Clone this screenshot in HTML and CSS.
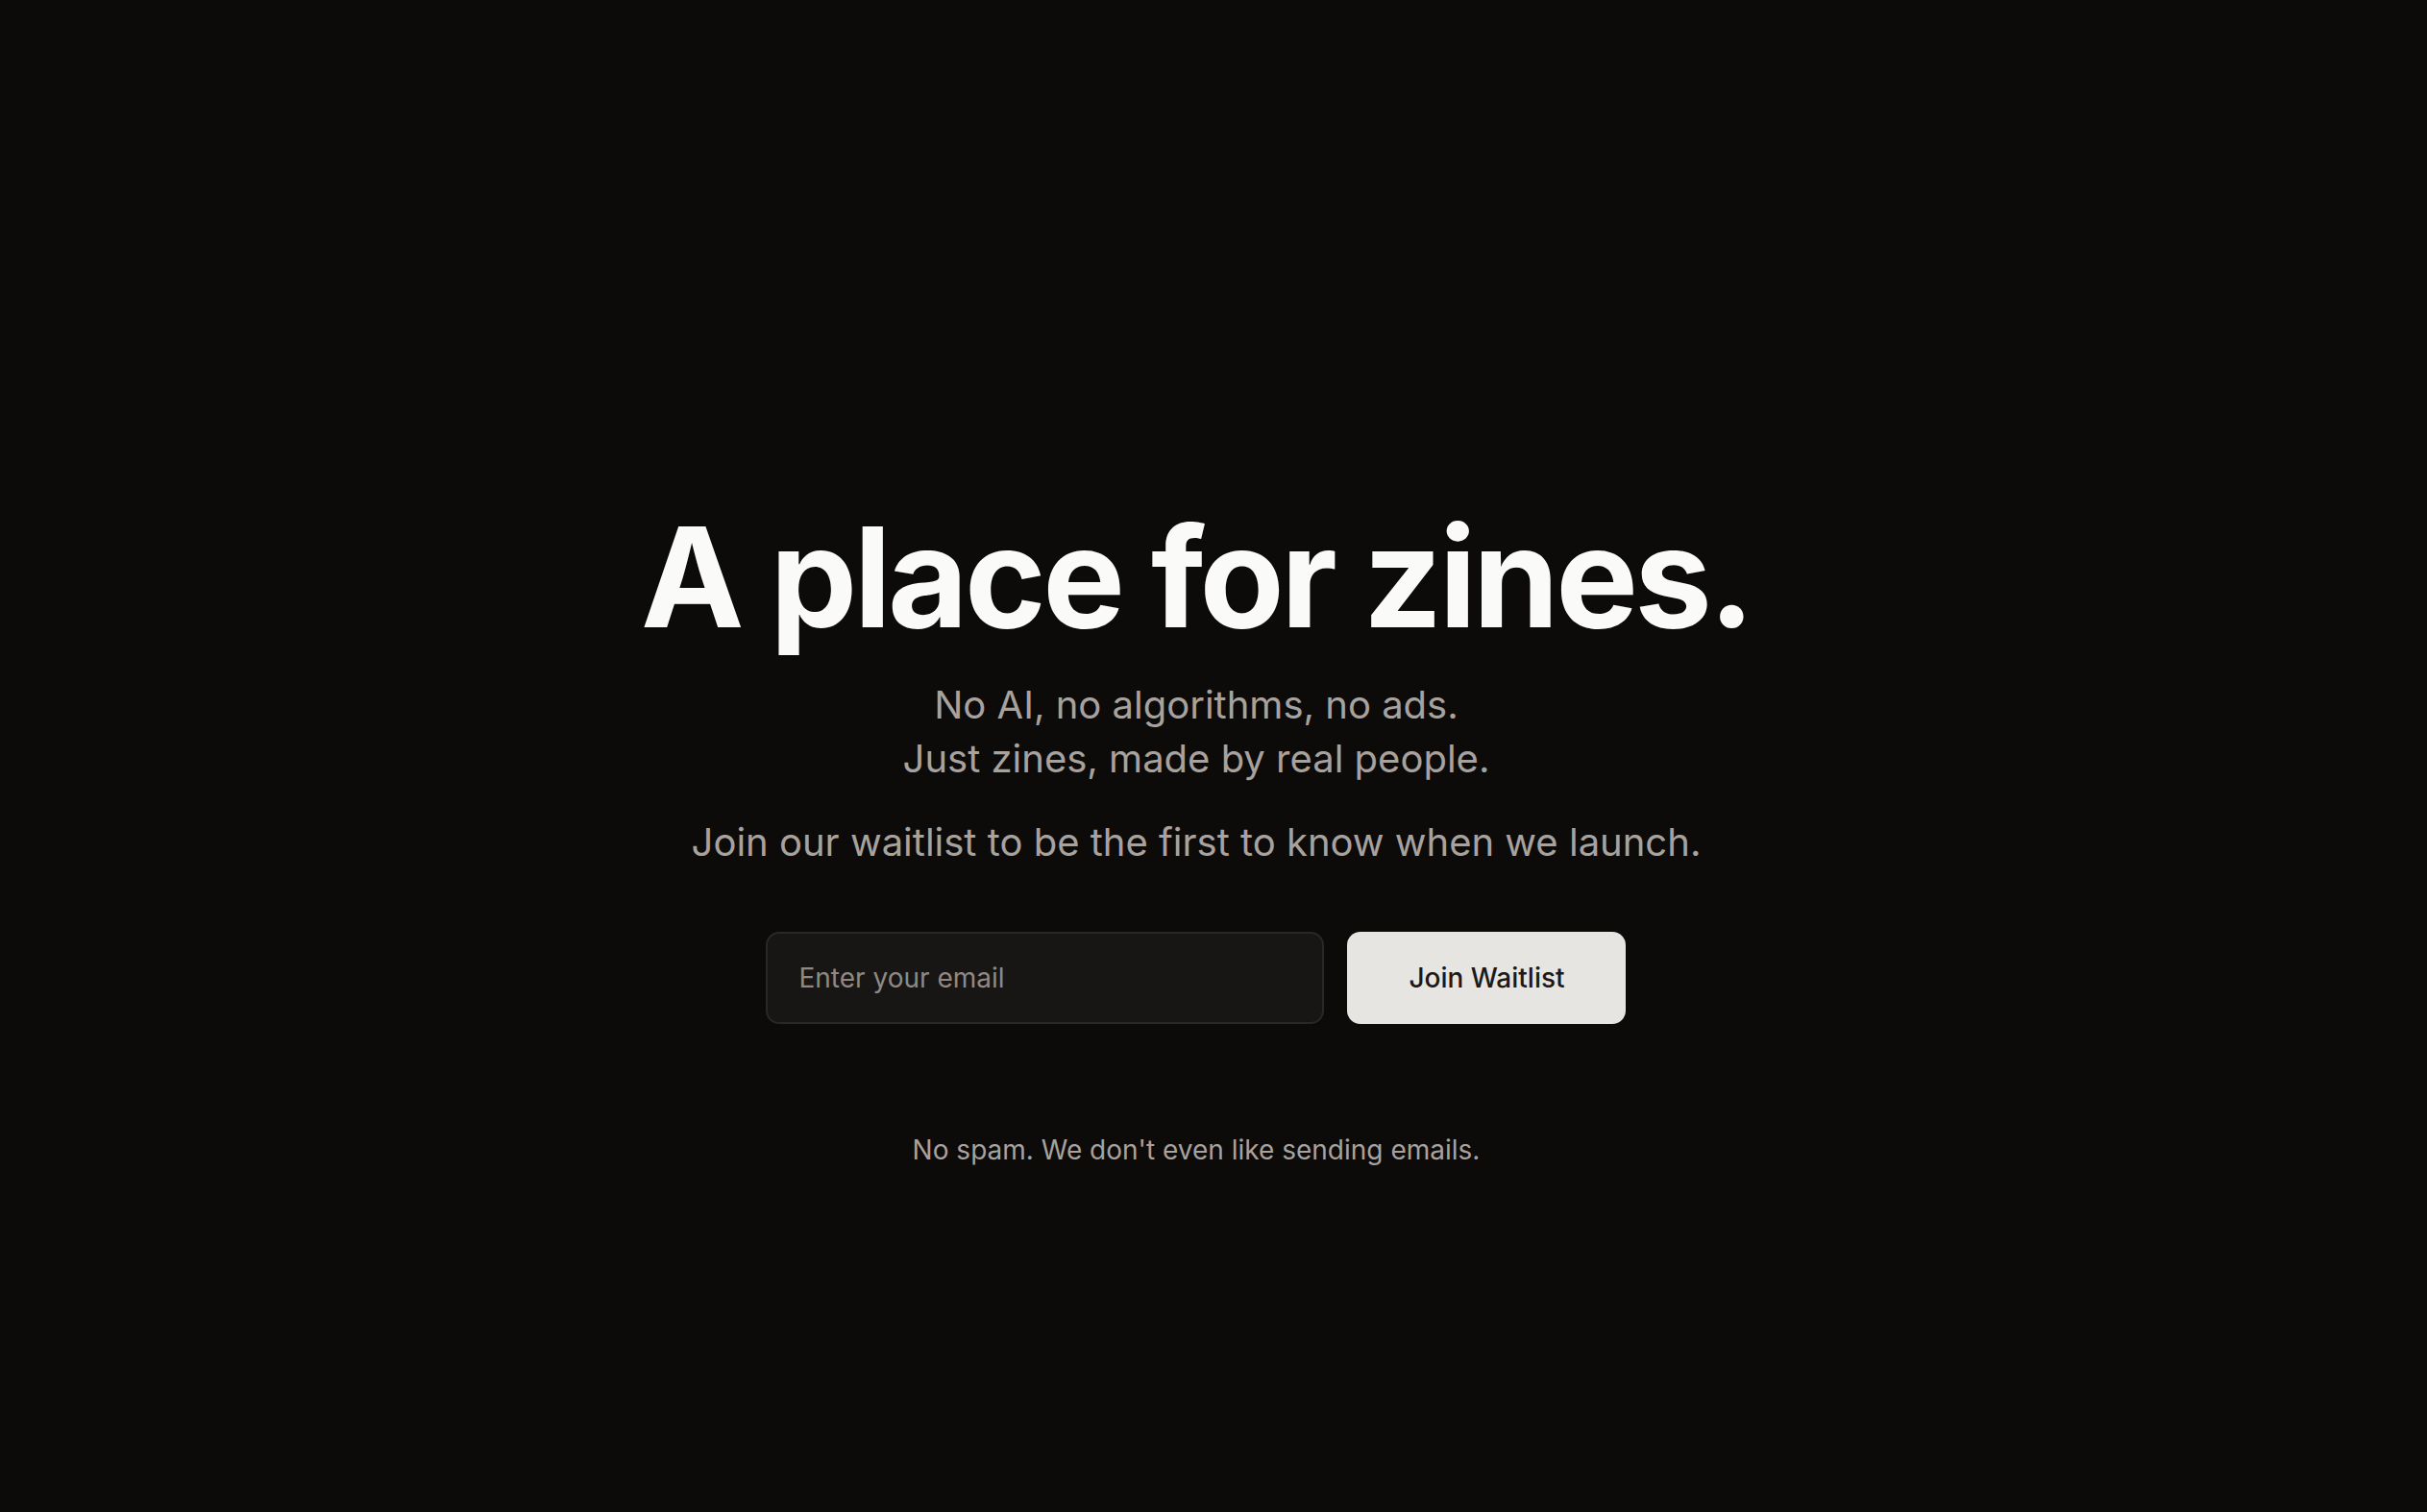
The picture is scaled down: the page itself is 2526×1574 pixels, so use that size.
FILE: index.html
```html
<!DOCTYPE html>
<html lang="en">
<head>
<meta charset="utf-8">
<title>A place for zines.</title>
<link rel="stylesheet" href="styles.css">
</head>
<body>
<main class="page">
  <section class="hero">
    <h1 class="title">A place for zines.</h1>
    <p class="tagline">No AI, no algorithms, no ads.<br>Just zines, made by real people.</p>
    <p class="invite">Join our waitlist to be the first to know when we launch.</p>
    <form class="signup" onsubmit="return false;">
      <input class="email" type="email" placeholder="Enter your email">
      <button class="join" type="submit">Join Waitlist</button>
    </form>
    <p class="note">No spam. We don't even like sending emails.</p>
  </section>
</main>
</body>
</html>
```

FILE: styles.css
```css
html, body {
  margin: 0;
  padding: 0;
  background: #0c0b0a;
}
body {
  font-family: Inter, "Noto Sans", sans-serif;
  color: #fafaf9;
}
.page {
  min-height: 1574px;
  box-sizing: border-box;
  padding: 529px 36px 0 0;
  display: flex;
  justify-content: center;
}
.hero {
  display: flex;
  flex-direction: column;
  align-items: center;
  text-align: center;
}
.title {
  margin: 0;
  font-size: 144px;
  line-height: 144px;
  font-weight: 700;
  letter-spacing: -0.025em;
  color: #fafaf9;
}
.tagline {
  margin: 33px 0 0;
  font-size: 40px;
  line-height: 56px;
  color: #a8a29e;
}
.invite {
  margin: 31px 0 0;
  font-size: 40px;
  line-height: 56px;
  color: #a8a29e;
}
.signup {
  margin-top: 65px;
  display: flex;
  gap: 24px;
}
.email {
  width: 581px;
  height: 96px;
  box-sizing: border-box;
  padding: 0 32px;
  background: #171615;
  border: 2px solid #2a2826;
  border-radius: 14px;
  font-family: Inter, "Noto Sans", sans-serif;
  font-size: 28px;
  color: #fafaf9;
  outline: none;
}
.email::placeholder {
  color: #8f8984;
}
.join {
  width: 290px;
  height: 96px;
  border: none;
  border-radius: 14px;
  background: #e7e5e2;
  color: #1c1917;
  font-family: Inter, "Noto Sans", sans-serif;
  font-size: 28px;
  font-weight: 500;
  cursor: pointer;
}
.note {
  margin: 110px 0 0;
  font-size: 28px;
  line-height: 42px;
  color: #a8a29e;
}
```
